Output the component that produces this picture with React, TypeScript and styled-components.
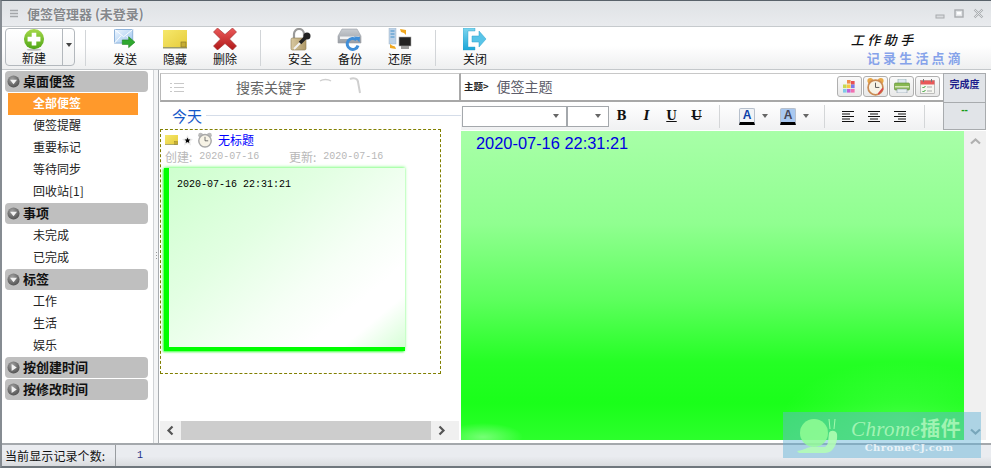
import React from "react";
import styled, { createGlobalStyle } from "styled-components";

const cjk = `"Noto Sans CJK SC", "Liberation Sans", sans-serif`;
const mono = `"Liberation Mono", "Noto Sans CJK SC", monospace`;

const Global = createGlobalStyle`
  html, body { margin: 0; padding: 0; background: #fff; }
  * { box-sizing: border-box; }
`;

const Win = styled.div`
  position: relative; width: 991px; height: 468px; overflow: hidden;
  display: flex; flex-direction: column;
  background: #e8eaed; font-family: ${cjk}; font-size: 12px; color: #222;
  border-top: 1px solid #59626a; border-left: 2px solid #868c92; border-bottom: 2px solid #6f767c;
`;
const TitleBar = styled.div`
  height: 26px; flex: none; display: flex; align-items: center; padding-left: 7px;
  background: linear-gradient(180deg, #dfe2e5, #e9ebee);
  border-bottom: 1px solid #c6cacd;
`;
const TitleText = styled.div`
  margin-left: 8px; font-size: 13px; font-weight: 700; color: #85888c; text-shadow: 0 0 2px #fff;
`;
const WinControls = styled.div`
  margin-left: auto; display: flex; align-items: center; gap: 9px; padding-right: 7px;
`;
const Toolbar = styled.div`
  height: 43px; flex: none; display: flex; align-items: stretch; padding: 1px 0 2px 3px;
  background: linear-gradient(180deg, #fff 0, #fff 45%, #eeeff0 100%);
  border-bottom: 1px solid #c4c8cb;
`;
const SplitNew = styled.div`
  width: 70px; height: 38px; display: flex; border: 1px solid #b3b8bd; border-radius: 4px;
  background: linear-gradient(180deg, #fff, #f1f2f3);
`;
const NewMain = styled.div`
  width: 57px; display: flex; flex-direction: column; align-items: center;
  border-right: 1px solid #b3b8bd; line-height: 14px; font-size: 12px; color: #111;
`;
const NewCaret = styled.div`
  flex: 1; display: flex; align-items: center; justify-content: center; padding-bottom: 4px;
`;
const Caret = styled.span<{ $c?: string }>`
  display: block; width: 0; height: 0;
  border-left: 3px solid transparent; border-right: 3px solid transparent;
  border-top: 4px solid ${(p) => p.$c || "#444"};
`;
const Sep = styled.div`
  width: 1px; margin: 2px 14px 0 10px; height: 36px; background: #d2d5d8;
`;
const ToolBtn = styled.div`
  width: 50px; display: flex; flex-direction: column; align-items: center;
  font-size: 12px; line-height: 15px; color: #111;
`;
const IconSlot = styled.div<{ $top?: number }>`
  height: 23px; display: flex; align-items: flex-start; justify-content: center;
  padding-top: ${(p) => p.$top || 0}px;
`;
const Logo = styled.div`
  margin-left: auto; padding: 4px 27px 0 0; display: flex; flex-direction: column; align-items: flex-end;
`;
const LogoTop = styled.div`
  font-size: 13px; line-height: 16px; letter-spacing: 3.5px; margin-right: 46px; color: #111; font-weight: 500; transform: skewX(-14deg);
`;
const LogoBottom = styled.div`
  font-size: 13px; line-height: 20px; letter-spacing: 3.2px; font-weight: 700; color: #86a3ea;
`;
const Main = styled.div`
  height: 373px; flex: none; display: flex; background: #fff;
`;
const Sidebar = styled.div`
  width: 151px; flex: none; padding: 1px 0 0 3px;
`;
const Section = styled.div`
  width: 143px; height: 21px; margin-bottom: 1px; display: flex; align-items: center; gap: 3px;
  padding: 0 0 0 2px; background: #bfbfbf; border-radius: 4px;
  font-size: 13px; font-weight: 700; color: #111; line-height: 1;
`;
const SectionText = styled.span`
  margin-top: -3px;
`;
const Item = styled.div<{ $active?: boolean }>`
  height: 22px; display: flex; align-items: center; font-size: 12px; padding-bottom: 3px;
  width: ${(p) => (p.$active ? "130px" : "auto")};
  margin-left: ${(p) => (p.$active ? "3px" : "0")};
  padding-left: ${(p) => (p.$active ? "25px" : "28px")};
  background: ${(p) => (p.$active ? "#ff992b" : "transparent")};
  color: ${(p) => (p.$active ? "#fff" : "#222")};
  font-weight: ${(p) => (p.$active ? 700 : 400)};
`;
const Splitter = styled.div`
  width: 6px; flex: none; display: flex; align-items: center; justify-content: center;
  background: #f4f5f6; border-left: 1px solid #d0d3d6; border-right: 1px solid #a9adb1;
`;
const Grip = styled.div`
  width: 1px; height: 8px; margin-top: -2px;
  background: repeating-linear-gradient(180deg, #999 0 1px, transparent 1px 3px);
`;
const Middle = styled.div`
  width: 302px; flex: none; display: flex; flex-direction: column; padding-top: 3px;
`;
const Search = styled.div`
  height: 29px; flex: none; margin-left: 1px; display: flex; align-items: center; padding-left: 9px;
  border-top: 1px solid #c8c8c8; border-left: 1px solid #b8b8b8; border-bottom: 2px solid #a8a8a8; border-right: 2px solid #a8a8a8;
  font-size: 14px; color: #666;
`;
const SearchLabel = styled.span`
  margin-left: 52px;
`;
const SearchGlass = styled.div`
  margin-left: 13px; display: flex;
`;
const DayRow = styled.div`
  height: 26px; flex: none; display: flex; align-items: center; padding-left: 13px; gap: 4px;
  font-size: 15px; color: #1457c8;
`;
const DayLine = styled.div`
  flex: 1; height: 1px; background: #d5dde9;
`;
const NoteBox = styled.div`
  margin: 1px 20px 0 1px; height: 245px; flex: none; padding: 2px 0 0 4px;
  border: 1px dashed #807f00;
`;
const NoteHead = styled.div`
  display: flex; align-items: center; height: 16px; gap: 4px; color: #0000ff; font-size: 12px;
`;
const NoteTitle = styled.span`
  margin: -2px 0 0 1px;
`;
const NoteMeta = styled.div`
  display: flex; height: 16px; align-items: center; color: #b8b8b8; font-size: 12px; margin-top: 0;
`;
const MetaGroup = styled.div`
  width: 124px; display: flex; align-items: center; gap: 7px;
`;
const MetaDate = styled.span`
  font-family: ${mono}; font-size: 10px; margin-top: 1px;
`;
const Card = styled.div`
  width: 241px; height: 183px; margin: 4px 0 0 -1px; padding: 11px 0 0 8px;
  border-left: 5px solid #00ff00; border-bottom: 4px solid #00ff00;
  box-shadow: -1px 1px 2px rgba(0, 255, 0, 0.7), 0 -1px 3px rgba(0, 255, 0, 0.45);
  background: linear-gradient(140deg, #ceffce 0, #e2ffe2 35%, #f6fff6 62%, #fff 78%, #fff 86%, #d6ffd6 100%);
  font-family: ${mono}; font-size: 10px; line-height: 12px; color: #000;
`;
const HScroll = styled.div`
  margin: auto 2px 3px 1px; height: 19px; flex: none; display: flex; align-items: stretch;
  background: #f0f0f0;
`;
const ScrollArrow = styled.div`
  width: 21px; display: flex; align-items: center; justify-content: center;
`;
const HThumb = styled.div`
  width: 250px; background: #cdcdcd;
`;
const Right = styled.div`
  flex: 1; display: flex; flex-direction: column; padding-top: 3px; min-width: 0;
`;
const Upper = styled.div`
  display: flex; height: 57px; flex: none;
`;
const UpperLeft = styled.div`
  width: 482px; flex: none; display: flex; flex-direction: column;
`;
const Subject = styled.div`
  height: 29px; flex: none; display: flex; align-items: center; padding: 0 0 2px 3px;
  border-bottom: 2px solid #a8a8a8; border-top: 1px solid #c8c8c8; color: #333;
`;
const SubjectTag = styled.span`
  font-size: 9.5px; font-weight: 700; color: #222; white-space: nowrap;
`;
const SubjectText = styled.span`
  margin-left: 8px; font-size: 14px; color: #5d5d6a;
`;
const SubjectBtns = styled.div`
  margin-left: auto; margin-right: 3px; display: flex; gap: 1px;
`;
const SquareBtn = styled.div`
  width: 25px; height: 21px; display: flex; align-items: center; justify-content: center;
  border: 1px solid #b0b0b0; border-radius: 3px; background: linear-gradient(180deg, #fafafa, #e8e8e8);
`;
const FormatBar = styled.div`
  flex: 1; display: flex; align-items: center; padding-left: 1px;
  background: linear-gradient(180deg, #fff, #f0f1f2);
`;
const Select = styled.div<{ $w: number }>`
  width: ${(p) => p.$w}px; height: 21px; display: flex; align-items: center; justify-content: flex-end;
  padding-right: 7px; border: 1px solid #a4a8ac; background: #fff; margin-right: ${(p) => (p.$w > 60 ? 0 : 0)}px;
`;
const FormatGlyph = styled.div<{ $w?: number; $under?: boolean; $strike?: boolean; $italic?: boolean }>`
  width: ${(p) => p.$w || 25}px; text-align: center;
  font-family: "DejaVu Serif", "Liberation Serif", serif; font-weight: 700; font-size: 12px; color: #111; line-height: 14px;
  font-style: ${(p) => (p.$italic ? "italic" : "normal")};
  text-decoration: ${(p) => (p.$under ? "underline" : p.$strike ? "line-through" : "none")};
`;
const FormatSep = styled.div<{ $ml: number; $mr: number }>`
  width: 1px; height: 23px; background: #d4d6d8; margin: 0 ${(p) => p.$mr}px 0 ${(p) => p.$ml}px;
`;
const ColorBtn = styled.div<{ $bg: string; $fg: string }>`
  width: 16px; height: 17px; display: flex; align-items: center; justify-content: center;
  background: ${(p) => p.$bg}; border: 1px solid #b7c0cc; border-bottom: 3px solid #000; border-radius: 2px 2px 0 0;
  font-family: "Liberation Sans", sans-serif; font-weight: 700; font-size: 12px; color: ${(p) => p.$fg}; line-height: 1;
`;
const CaretGap = styled.div<{ $ml: number; $mr: number }>`
  margin: 0 ${(p) => p.$mr}px 0 ${(p) => p.$ml}px;
`;
const AlignSlot = styled.div`
  width: 26px; display: flex; justify-content: center;
`;
const Progress = styled.div`
  width: 43px; flex: none; height: 57px; display: flex; flex-direction: column;
  background: #e1e4e8; border: 1px solid #a8abae;
`;
const ProgressTitle = styled.div`
  height: 29px; border-bottom: 1px solid #a8abae; text-align: center;
  font-size: 10px; line-height: 20px; font-weight: 700; color: #1c1c8c; white-space: nowrap;
`;
const ProgressValue = styled.div`
  flex: 1; display: flex; justify-content: center; padding-top: 1px;
  font-family: "Liberation Sans", sans-serif; font-size: 10px; line-height: 12px; font-weight: 700; color: #129a12;
`;
const Lower = styled.div`
  flex: 1; display: flex; margin: 1px 0 3px 0; min-height: 0;
`;
const Editor = styled.div`
  width: 503px; flex: none; padding: 3px 0 0 15px;
  background:
    radial-gradient(ellipse 40px 14px at 22px 306px, rgba(255,255,255,.35), rgba(255,255,255,0) 100%),
    radial-gradient(ellipse 120px 60px at 440px 290px, rgba(255,255,255,.14), rgba(255,255,255,0) 100%),
    linear-gradient(180deg, #a8ffa8 0, #90ff90 30%, #5cff5c 55%, #24ff24 75%, #1aff1a 88%, #2cff2c 100%);
  font-family: "Liberation Sans", sans-serif; font-size: 16.4px; line-height: 19px; color: #0000e0;
`;
const VScroll = styled.div`
  width: 22px; flex: none; background: #f0f0f0; display: flex; flex-direction: column; align-items: center; justify-content: space-between;
  padding: 5px 0 3px;
`;
const Status = styled.div`
  flex: 1; display: flex; align-items: center; padding-left: 3px; font-size: 12px; color: #111;
  border-top: 2px solid #a4a8ac;
  background: linear-gradient(180deg, #eaecf0 0, #eaecf0 55%, #d9dbde 100%);
`;
const StatusLabel = styled.div`
  width: 111px; height: 100%; display: flex; align-items: center; border-right: 1px solid #989ca0; letter-spacing: 0.1px;
`;
const StatusValue = styled.div`
  margin-left: 21px; font-family: ${mono}; font-size: 10px; color: #1b2f8a;
`;
const Watermark = styled.div`
  position: absolute; left: 781px; top: 411px; width: 198px; height: 46px;
  background: rgba(100, 180, 215, 0.48);
  display: flex; padding: 4px 0 0 14px; gap: 10px;
`;
const WaterText = styled.div`
  display: flex; flex-direction: column; align-items: center;
`;
const WaterBig = styled.div`
  font-family: "Liberation Serif", serif; font-style: italic; font-size: 21px; line-height: 24px; letter-spacing: .4px;
  color: rgba(200, 255, 200, .7); white-space: nowrap;
`;
const WaterCjk = styled.span`
  font-family: ${cjk}; font-style: normal; font-weight: 700; font-size: 20px;
`;
const WaterSmall = styled.div`
  font-family: "DejaVu Serif", serif; font-weight: 700; font-size: 10px; line-height: 14px; letter-spacing: 0.5px;
  color: rgba(255,255,255,.75); white-space: nowrap; margin-left: 6px;
`;

const MenuGlyph = () => (
  <svg width="10" height="9" viewBox="0 0 10 9"><path d="M1 1.500h8M1 4.500h8M1 7.500h8" stroke="#a4a7aa" strokeWidth="1.400" /></svg>
);
const Controls = () => (
  <WinControls>
    <svg width="10" height="12" viewBox="0 0 10 12"><rect x="1" y="7" width="8" height="3" fill="#d9dbde" stroke="#a8abae" /></svg>
    <svg width="10" height="10" viewBox="0 0 10 10"><rect x="1" y="1" width="8" height="7" fill="none" stroke="#a8abae" strokeWidth="1.400" /><rect x="3" y="3" width="4" height="2.500" fill="#fff" /></svg>
    <svg width="11" height="11" viewBox="0 0 11 11"><path d="M1.500 1.500l8 8M9.500 1.500l-8 8" stroke="#a8abae" strokeWidth="2.200" /><path d="M1.500 1.500l8 8M9.500 1.500l-8 8" stroke="#eef0f2" strokeWidth=".8" /></svg>
  </WinControls>
);
const PlusIcon = () => (
  <svg width="24" height="24" viewBox="0 0 24 24">
    <defs><linearGradient id="pg" x1="0" y1="0" x2="0" y2="1"><stop offset="0" stopColor="#a6d94a" /><stop offset="1" stopColor="#4ea516" /></linearGradient></defs>
    <ellipse cx="12" cy="22.600" rx="8" ry="1.200" fill="#bbb" />
    <circle cx="12" cy="11" r="11" fill="url(#pg)" />
    <path d="M9.500 4h5v4.500H19v5h-4.500V18h-5v-4.500H5v-5h4.500z" fill="#fff" />
  </svg>
);
const MailIcon = () => (
  <svg width="24" height="20" viewBox="0 0 24 22">
    <defs><linearGradient id="mg" x1="0" y1="0" x2="1" y2="1"><stop offset="0" stopColor="#eef6ff" /><stop offset="1" stopColor="#9cc4ee" /></linearGradient></defs>
    <rect x=".5" y=".5" width="20" height="15" fill="url(#mg)" stroke="#88aed8" />
    <path d="M.5 .5l10 8 10-8M.5 15.500l7-8M20.500 15.500l-7-8" fill="none" stroke="#fff" />
    <path d="M9 12h7V8.500l7 6-7 6V17H9z" fill="#2fa82f" stroke="#1b7d1b" strokeWidth=".6" />
  </svg>
);
const StickyIcon = ({ size = 24 }: { size?: number }) => (
  <svg width={size} height={(size * 19) / 24} viewBox="0 0 24 19">
    <defs><linearGradient id="sg" x1="0" y1="0" x2="1" y2="1"><stop offset="0" stopColor="#f6e86c" /><stop offset="1" stopColor="#e6cc3a" /></linearGradient></defs>
    <rect x="0" y="0" width="24" height="18" fill="url(#sg)" />
    <rect x="0" y="17" width="24" height="1.500" fill="#9a9a6a" />
    <rect x="18" y="12" width="5" height="5" fill="#c6ad34" stroke="#8a7a2a" strokeWidth=".7" />
  </svg>
);
const CrossIcon = () => (
  <svg width="24" height="22" viewBox="0 0 24 22">
    <defs><linearGradient id="cg" x1="0" y1="0" x2="0" y2="1"><stop offset="0" stopColor="#ec5a5a" /><stop offset="1" stopColor="#b01818" /></linearGradient></defs>
    <path d="M4.500 0L12 6.500 19.500 0 23.500 4 16.500 11 23.500 18 19.500 22 12 15.500 4.500 22 .5 18 7.500 11 .5 4z" fill="url(#cg)" stroke="#9a2a2a" strokeWidth=".6" />
  </svg>
);
const LockIcon = () => (
  <svg width="24" height="23" viewBox="0 0 24 23">
    <defs><linearGradient id="lg" x1="0" y1="0" x2="1" y2="0"><stop offset="0" stopColor="#d8c8a0" /><stop offset="1" stopColor="#b09a68" /></linearGradient></defs>
    <path d="M6 10V6a5 5 0 0 1 10 0v4" fill="none" stroke="#9a9a9a" strokeWidth="2.200" />
    <rect x="3" y="10" width="15" height="12" rx="1.500" fill="url(#lg)" stroke="#8a7a50" strokeWidth=".6" />
    <path d="M6 21l7-7" stroke="#f2f2f2" strokeWidth="2" />
    <path d="M12 15l6-6" stroke="#222" strokeWidth="3.500" />
    <circle cx="19" cy="8" r="3.500" fill="#222" />
  </svg>
);
const DiskIcon = () => (
  <svg width="26" height="24" viewBox="0 0 26 24">
    <defs><linearGradient id="dg" x1="0" y1="0" x2="0" y2="1"><stop offset="0" stopColor="#c9cdd2" /><stop offset="1" stopColor="#9a9ea4" /></linearGradient></defs>
    <path d="M5 1h15l4 7v7H1V8z" fill="url(#dg)" stroke="#9aa0a6" strokeWidth=".6" />
    <rect x="3" y="8.500" width="19" height="2.500" fill="#f2f3f4" />
    <path d="M21 17.500a5.500 5.500 0 1 1-1.500-5.500" fill="none" stroke="#3f8ed8" strokeWidth="3" />
    <path d="M17 8.500l6 .5-.5 5.500z" fill="#3f8ed8" />
  </svg>
);
const RestoreIcon = () => (
  <svg width="24" height="23" viewBox="0 0 24 23">
    <rect x="1" y="0" width="7" height="16" fill="#bcd2e8" stroke="#a3b6c8" strokeWidth=".5" />
    <path d="M2.500 3h4M2.500 6h4M2.500 9h4" stroke="#3f8ec8" strokeWidth="1.200" />
    <rect x="11" y="9" width="12" height="9" fill="#222" stroke="#aaa" strokeWidth=".6" />
    <rect x="13" y="18" width="8" height="3" fill="#999" />
    <path d="M12 1l6 1v5l-2-2-3-1z" fill="#f0a820" />
    <path d="M8 21l-6-1v-4l2 1.500 3 1z" fill="#f0a820" />
  </svg>
);
const ExitIcon = () => (
  <svg width="24" height="24" viewBox="0 0 24 24">
    <defs><linearGradient id="eg" x1="0" y1="0" x2="0" y2="1"><stop offset="0" stopColor="#7ed6ee" /><stop offset="1" stopColor="#1ba6d8" /></linearGradient></defs>
    <path d="M0 0h12v3H5l0 16h7v3H0z" fill="url(#eg)" stroke="#2a9ac4" strokeWidth=".4" />
    <path d="M9 8h7V3l7 8-7 8v-5H9z" fill="#58c4e8" stroke="#2aa2cc" strokeWidth=".5" />
  </svg>
);
const LoupeFaint = () => (
  <svg width="48" height="24" viewBox="0 0 48 24">
    <path d="M1 6c3-2 8-2 11 0" fill="none" stroke="#cfcfcf" strokeWidth="1.500" />
    <path d="M31 4c4-2 8 0 8 3l2 11" fill="none" stroke="#cfcfcf" strokeWidth="2" />
  </svg>
);
const Arrow = ({ open }: { open: boolean }) => (
  <svg width="13" height="13" viewBox="0 0 14 14">
    <defs><radialGradient id="ba" cx=".4" cy=".3" r=".9"><stop offset="0" stopColor="#a0a0a0" /><stop offset="1" stopColor="#3e3e3e" /></radialGradient></defs>
    <circle cx="7" cy="7" r="6.500" fill="url(#ba)" />
    {open ? <path d="M3.200 5h7.600L7 10z" fill="#f2f2f2" /> : <path d="M5 3.200v7.600L10.500 7z" fill="#f2f2f2" />}
  </svg>
);
const Clock = ({ size, gray }: { size: number; gray?: boolean }) => (
  <svg width={size} height={size} viewBox="0 0 20 20">
    <circle cx="4.500" cy="4" r="3" fill={gray ? "#bbb" : "#e8a848"} />
    <circle cx="15.500" cy="4" r="3" fill={gray ? "#bbb" : "#e8a848"} />
    <circle cx="10" cy="11" r="7.800" fill="#f7f3e6" stroke={gray ? "#a8a8a8" : "#c98a52"} strokeWidth="1.800" />
    <path d="M10 6v5h4" fill="none" stroke="#555" strokeWidth="1" />
    {!gray && <path d="M13 18l5-6" stroke="#d84a4a" strokeWidth="1.800" />}
  </svg>
);
const Star = () => (
  <svg width="11" height="11" viewBox="0 0 11 11">
    <path d="M5.500 0l1.700 3.600 3.800.5-2.800 2.600.7 3.800-3.400-1.900-3.400 1.900.7-3.800L0 4.100l3.800-.5z" fill="#e8e8e8" />
    <path d="M5.500 2.500l.9 1.900 2 .2-1.500 1.400.4 2-1.800-1-1.800 1 .4-2L2.600 4.600l2-.2z" fill="#000" />
  </svg>
);
const Palette = () => (
  <svg width="15" height="13" viewBox="0 0 15 13">
    <rect x="5" y="0" width="3.600" height="3.600" fill="#f08a4a" /><rect x="9" y="1" width="3.600" height="3.600" fill="#e85050" />
    <rect x="1" y="4.500" width="3.600" height="3.600" fill="#c8d850" /><rect x="5" y="4.500" width="3.600" height="3.600" fill="#f8c840" /><rect x="9" y="4.500" width="3.600" height="3.600" fill="#7a7ae8" />
    <rect x="1" y="9" width="3.600" height="3.600" fill="#80c8e8" /><rect x="5" y="9" width="3.600" height="3.600" fill="#c060d8" /><rect x="9" y="9" width="3.600" height="3.600" fill="#f070b0" />
  </svg>
);
const Printer = () => (
  <svg width="16" height="14" viewBox="0 0 16 14">
    <rect x="4" y="0" width="8" height="5" fill="#dde6ee" stroke="#8aa" strokeWidth=".6" />
    <rect x="0.500" y="4" width="15" height="7" rx="1" fill="#88b850" stroke="#5a8a30" strokeWidth=".6" />
    <rect x="1" y="7" width="14" height="1.500" fill="#d8e8b8" />
    <rect x="3" y="10" width="10" height="4" fill="#e8eef2" stroke="#8a9aa8" strokeWidth=".6" />
  </svg>
);
const Planner = () => (
  <svg width="15" height="15" viewBox="0 0 15 15">
    <rect x=".5" y="1.500" width="14" height="13" fill="#f6f6f0" stroke="#999" strokeWidth=".6" />
    <rect x=".5" y="1.500" width="14" height="4" fill="#e85858" />
    <path d="M3.500 0v3M11.500 0v3" stroke="#777" strokeWidth="1" />
    <path d="M2.500 8l1 1 2-2M2.500 12l1 1 2-2" fill="none" stroke="#2a9a2a" strokeWidth="1" />
    <path d="M7 8h5M7 12h5" stroke="#aaa" strokeWidth="1" />
  </svg>
);
const Chevron = ({ d, c = "#555" }: { d: string; c?: string }) => (
  <svg width="11" height="11" viewBox="0 0 11 11"><path d={d} fill="none" stroke={c} strokeWidth="2.200" /></svg>
);
const AlignIcon = ({ d }: { d: string }) => (
  <svg width="12" height="11" viewBox="0 0 12 11"><path d={d} stroke="#111" strokeWidth="1" /></svg>
);
const Snail = () => (
  <svg width="44" height="38" viewBox="0 0 44 38">
    <circle cx="17" cy="17" r="14" fill="rgba(150,255,150,.8)" />
    <path d="M0 35c8-1 10-4 14-4h14c4-2 3-8 4-14 1-3 7-3 8 1 1 8-3 19-12 19H2z" fill="rgba(180,255,180,.85)" />
    <path d="M33 13l-1-10M37 13l1-10" stroke="rgba(180,255,180,.85)" strokeWidth="1" />
  </svg>
);

const topItems = ["便签提醒", "重要标记", "等待同步", "回收站[1]"];

const Head = ({ open, children }: { open: boolean; children: string }) => (
  <Section><Arrow open={open} /><SectionText>{children}</SectionText></Section>
);

export default function App() {
  return (
    <Win>
      <Global />
      <TitleBar>
        <MenuGlyph />
        <TitleText>便签管理器 (未登录)</TitleText>
        <Controls />
      </TitleBar>
      <Toolbar>
        <SplitNew>
          <NewMain><PlusIcon />新建</NewMain>
          <NewCaret><Caret /></NewCaret>
        </SplitNew>
        <Sep />
        <ToolBtn><IconSlot $top={1}><MailIcon /></IconSlot>发送</ToolBtn>
        <ToolBtn><IconSlot $top={2}><StickyIcon /></IconSlot>隐藏</ToolBtn>
        <ToolBtn><IconSlot><CrossIcon /></IconSlot>删除</ToolBtn>
        <Sep />
        <ToolBtn><IconSlot><LockIcon /></IconSlot>安全</ToolBtn>
        <ToolBtn><IconSlot><DiskIcon /></IconSlot>备份</ToolBtn>
        <ToolBtn><IconSlot><RestoreIcon /></IconSlot>还原</ToolBtn>
        <Sep />
        <ToolBtn><IconSlot><ExitIcon /></IconSlot>关闭</ToolBtn>
        <Logo>
          <LogoTop>工作助手</LogoTop>
          <LogoBottom>记录生活点滴</LogoBottom>
        </Logo>
      </Toolbar>
      <Main>
        <Sidebar>
          <Head open>桌面便签</Head>
          <Item $active>全部便签</Item>
          {topItems.map((t) => <Item key={t}>{t}</Item>)}
          <Head open>事项</Head>
          <Item>未完成</Item>
          <Item>已完成</Item>
          <Head open>标签</Head>
          <Item>工作</Item>
          <Item>生活</Item>
          <Item>娱乐</Item>
          <Head open={false}>按创建时间</Head>
          <Head open={false}>按修改时间</Head>
        </Sidebar>
        <Splitter><Grip /></Splitter>
        <Middle>
          <Search>
            <svg width="14" height="11" viewBox="0 0 14 11"><path d="M0 1.500h2M4 1.500h10M0 5.500h2M4 5.500h10M0 9.500h2M4 9.500h10" stroke="#c8c8c8" strokeWidth="1.200" /></svg>
            <SearchLabel>搜索关键字</SearchLabel>
            <SearchGlass><LoupeFaint /></SearchGlass>
          </Search>
          <DayRow>今天<DayLine /></DayRow>
          <NoteBox>
            <NoteHead>
              <StickyIcon size={13} />
              <Star />
              <Clock size={16} gray />
              <NoteTitle>无标题</NoteTitle>
            </NoteHead>
            <NoteMeta>
              <MetaGroup>创建:<MetaDate>2020-07-16</MetaDate></MetaGroup>
              <MetaGroup>更新:<MetaDate>2020-07-16</MetaDate></MetaGroup>
            </NoteMeta>
            <Card>2020-07-16 22:31:21</Card>
          </NoteBox>
          <HScroll>
            <ScrollArrow><Chevron d="M7.500 1.500L3.500 5.500l4 4" /></ScrollArrow>
            <HThumb />
            <ScrollArrow><Chevron d="M3.500 1.500l4 4-4 4" /></ScrollArrow>
          </HScroll>
        </Middle>
        <Right>
          <Upper>
            <UpperLeft>
              <Subject>
                <SubjectTag>主题&gt;</SubjectTag>
                <SubjectText>便签主题</SubjectText>
                <SubjectBtns>
                  <SquareBtn><Palette /></SquareBtn>
                  <SquareBtn><Clock size={19} /></SquareBtn>
                  <SquareBtn><Printer /></SquareBtn>
                  <SquareBtn><Planner /></SquareBtn>
                </SubjectBtns>
              </Subject>
              <FormatBar>
                <Select $w={105}><Caret $c="#666" /></Select>
                <Select $w={42}><Caret $c="#666" /></Select>
                <FormatGlyph $w={25}>B</FormatGlyph>
                <FormatGlyph $w={25} $italic>I</FormatGlyph>
                <FormatGlyph $w={25} $under>U</FormatGlyph>
                <FormatGlyph $w={25} $strike>U</FormatGlyph>
                <FormatSep $ml={10} $mr={19} />
                <ColorBtn $bg="#f1f3f6" $fg="#0b3fa8">A</ColorBtn>
                <CaretGap $ml={7} $mr={12}><Caret $c="#666" /></CaretGap>
                <ColorBtn $bg="#a9c8f0" $fg="#445">A</ColorBtn>
                <CaretGap $ml={7} $mr={15}><Caret $c="#666" /></CaretGap>
                <FormatSep $ml={0} $mr={10} />
                <AlignSlot><AlignIcon d="M0 .5h12M0 3h8M0 5.500h12M0 8h8M0 10.500h12" /></AlignSlot>
                <AlignSlot><AlignIcon d="M0 .5h12M2 3h8M0 5.500h12M2 8h8M0 10.500h12" /></AlignSlot>
                <AlignSlot><AlignIcon d="M0 .5h12M4 3h8M0 5.500h12M4 8h8M0 10.500h12" /></AlignSlot>
                <FormatSep $ml={11} $mr={0} />
              </FormatBar>
            </UpperLeft>
            <Progress>
              <ProgressTitle>完成度</ProgressTitle>
              <ProgressValue>--</ProgressValue>
            </Progress>
          </Upper>
          <Lower>
            <Editor>2020-07-16 22:31:21</Editor>
            <VScroll>
              <Chevron d="M1 7.500l4.500-4 4.500 4" c="#b0b0b0" />
              <Chevron d="M1 3.500l4.500 4 4.500-4" c="#8a9aa0" />
            </VScroll>
          </Lower>
        </Right>
      </Main>
      <Status>
        <StatusLabel>当前显示记录个数:</StatusLabel>
        <StatusValue>1</StatusValue>
      </Status>
      <Watermark>
        <Snail />
        <WaterText>
          <WaterBig>Chrome<WaterCjk>插件</WaterCjk></WaterBig>
          <WaterSmall>ChromeCJ.com</WaterSmall>
        </WaterText>
      </Watermark>
    </Win>
  );
}
